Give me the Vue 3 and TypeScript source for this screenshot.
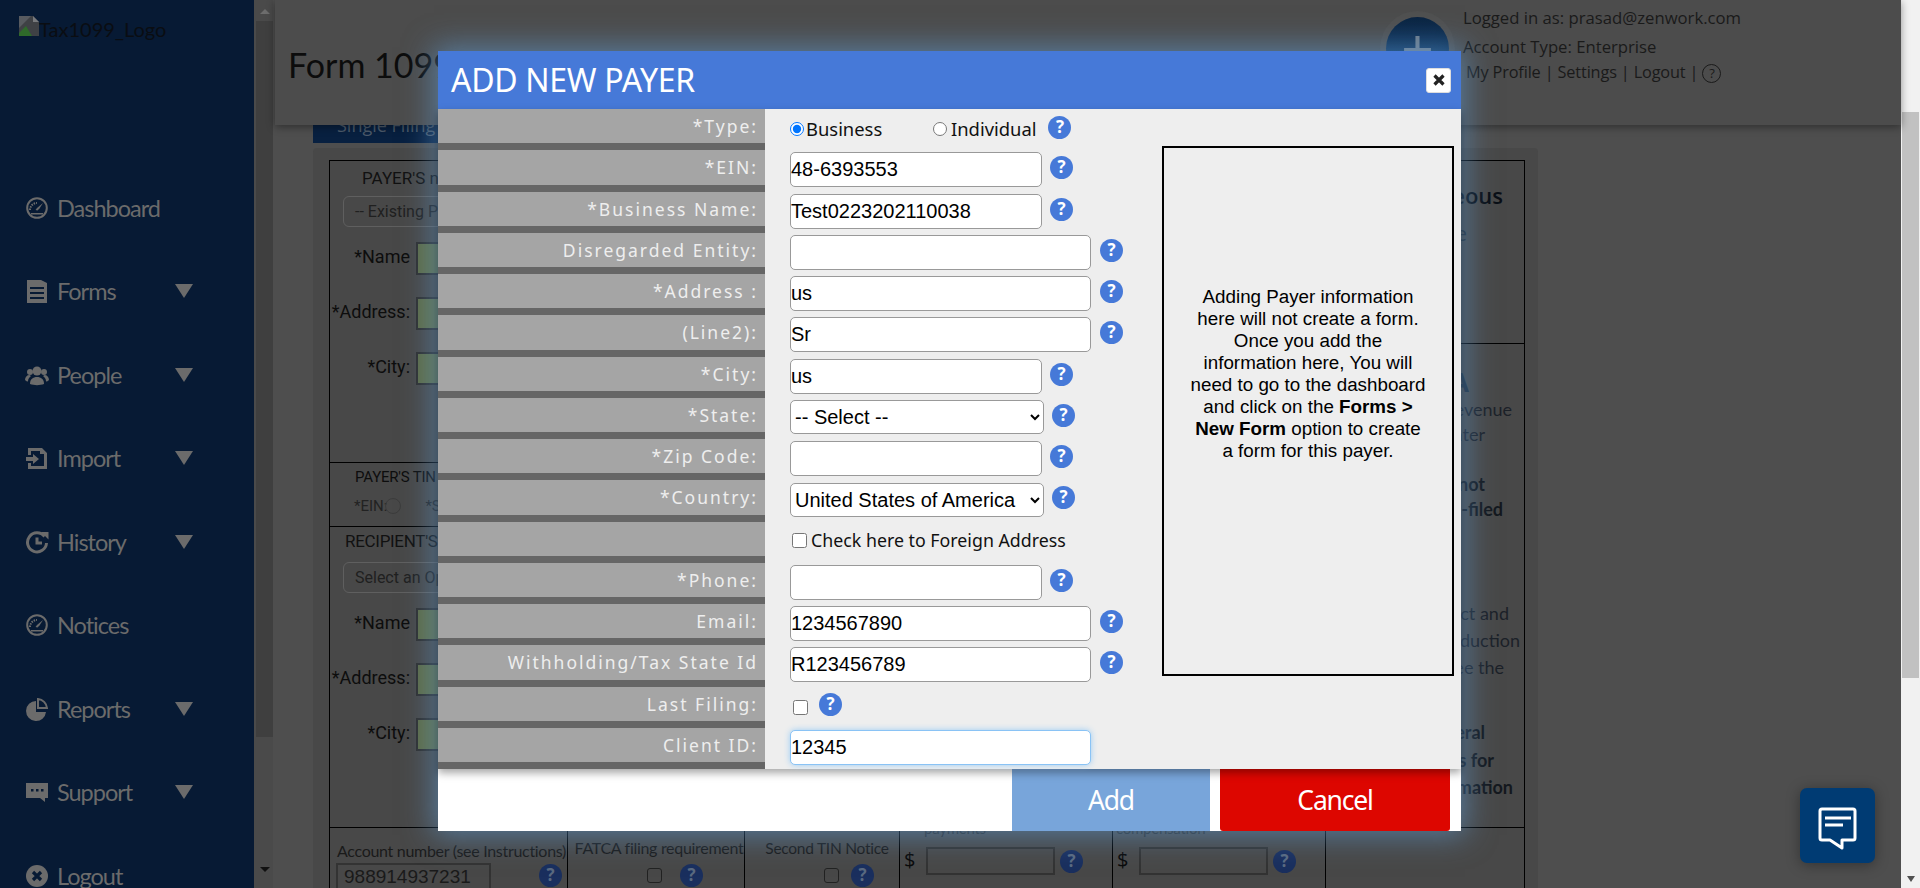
<script setup lang="ts">
interface Row { label: string; kind: string; value?: string; wide?: boolean }
const rows: Row[] = [
  { label: '*Type:', kind: 'type' },
  { label: '*EIN:', kind: 'input', value: '48-6393553' },
  { label: '*Business Name:', kind: 'input', value: 'Test0223202110038' },
  { label: 'Disregarded Entity:', kind: 'input', value: '', wide: true },
  { label: '*Address :', kind: 'input', value: 'us', wide: true },
  { label: '(Line2):', kind: 'input', value: 'Sr', wide: true },
  { label: '*City:', kind: 'input', value: 'us' },
  { label: '*State:', kind: 'state' },
  { label: '*Zip Code:', kind: 'input', value: '' },
  { label: '*Country:', kind: 'country' },
  { label: '', kind: 'foreign' },
  { label: '*Phone:', kind: 'input', value: '' },
  { label: 'Email:', kind: 'input', value: '1234567890', wide: true },
  { label: 'Withholding/Tax State Id', kind: 'input', value: 'R123456789', wide: true },
  { label: 'Last Filing:', kind: 'last' },
  { label: 'Client ID:', kind: 'client', value: '12345' },
]
const menu = [
  { name: 'Dashboard', icon: 'gauge', arrow: false },
  { name: 'Forms', icon: 'forms', arrow: true },
  { name: 'People', icon: 'people', arrow: true },
  { name: 'Import', icon: 'import', arrow: true },
  { name: 'History', icon: 'history', arrow: true },
  { name: 'Notices', icon: 'gauge', arrow: false },
  { name: 'Reports', icon: 'reports', arrow: true },
  { name: 'Support', icon: 'support', arrow: true },
  { name: 'Logout', icon: 'logout', arrow: false },
]
const topLines = [
  { t: 'Miscellaneous', c: 'h', gap: 19, pad: 21 },
  { t: 'Income type', c: 'm', gap: 10, pad: 57 },
]
const sideLines = [
  { t: 'Copy A', c: 'hb', gap: 23, pad: 55 },
  { t: 'For Internal Revenue', c: 's', gap: 0, pad: 12 },
  { t: 'Service Center', c: 's', gap: 0, pad: 39 },
  { t: 'Do not', c: 'sb', gap: 25, pad: 39 },
  { t: 'be e-filed', c: 'sb', gap: 0, pad: 21 },
  { t: 'for direct and', c: 's', gap: 79, pad: 15 },
  { t: 'for reduction', c: 's', gap: 2, pad: 4 },
  { t: 'see the', c: 's', gap: 2, pad: 20 },
  { t: 'General', c: 'sb', gap: 40, pad: 39 },
  { t: 'Instructions for', c: 'sb', gap: 3, pad: 30 },
  { t: 'information', c: 'sb', gap: 2, pad: 11 },
]
</script>

<template>
  <div class="page">
    <aside class="sidebar">
      <div class="logo">
        <svg class="broken" width="20" height="20" viewBox="0 0 20 20">
          <path d="M0 0h14l6 6v14H0z" fill="#3f4145" />
          <path d="M14 0l6 6h-6z" fill="#77797c" />
          <path d="M0 20v-3l7-7 6 10z" fill="#2f6a2a" />
          <path d="M0 0h12L0 12z" fill="#585b60" />
        </svg>
        <span>Tax1099_Logo</span>
      </div>
      <nav class="menu">
        <div v-for="m in menu" :key="m.name" class="mitem">
          <svg class="micon" width="24" height="24" viewBox="0 0 24 24" fill="#6b6b6b">
            <template v-if="m.icon === 'gauge'">
              <circle cx="12" cy="12" r="9.800" fill="none" stroke="#6b6b6b" stroke-width="2" />
              <path d="M5 14a7 7 0 0 1 7-7" fill="none" stroke="#6b6b6b" stroke-width="2" stroke-dasharray="1.500 1" />
              <path d="M18 7l-6 5-1.500 2 2 .5 2-2z" />
              <path d="M6 17h12v1.500H6z" />
            </template>
            <template v-else-if="m.icon === 'forms'">
              <path d="M2 1h14l6 3v20H2zM5 8v2h14V8zm0 5v2h14v-2zm0 5v2h14v-2z" fill-rule="evenodd" />
            </template>
            <template v-else-if="m.icon === 'people'">
              <circle cx="12" cy="8" r="4.500" />
              <circle cx="5" cy="9" r="3" />
              <circle cx="19" cy="9" r="3" />
              <path d="M5 21c0-5 3-7 7-7s7 2 7 7c-4 1.500-10 1.500-14 0z" />
              <path d="M0 17c0-3 2-5 4.500-5l1.500 1c-2 1.500-3 3-3 5.500-1 0-2-.5-3-1.500zM24 17c0-3-2-5-4.500-5l-1.500 1c2 1.500 3 3 3 5.500 1 0 2-.5 3-1.500z" />
            </template>
            <template v-else-if="m.icon === 'import'">
              <path d="M3 2h14l5 5v16H3v-6h3v3h13V8h-4V5H6v4H3z" />
              <path d="M1 11h7V8l6 5-6 5v-3H1z" />
            </template>
            <template v-else-if="m.icon === 'history'">
              <path d="M19.500 6.500A9.500 9.500 0 1 0 21.500 13" fill="none" stroke="#6b6b6b" stroke-width="3" />
              <path d="M16 2h7.500v7.500z" />
              <path d="M12 7.500v5.500h5" fill="none" stroke="#6b6b6b" stroke-width="3" />
            </template>
            <template v-else-if="m.icon === 'reports'">
              <path d="M11 4a10 10 0 1 0 10 11H11z" />
              <path d="M13 2a10 10 0 0 1 9 9h-9z" fill="none" stroke="#6b6b6b" stroke-width="2" />
            </template>
            <template v-else-if="m.icon === 'support'">
              <path d="M1 3h22v15h-3v4l-5-4H1z" />
              <path d="M6 9h2.500v2.500H6zm5 0h2.500v2.500H11zm5 0h2.500v2.500H16z" fill="#071a34" />
            </template>
            <template v-else>
              <circle cx="12" cy="12" r="11" />
              <path d="M8 8l8 8M16 8l-8 8" stroke="#071a34" stroke-width="3.200" />
            </template>
          </svg>
          <span class="mname">{{ m.name }}</span>
          <i v-if="m.arrow" class="marrow"></i>
        </div>
      </nav>
    </aside>

    <div class="inner-scroll">
      <i class="up"></i>
      <div class="inner-thumb"></div>
      <i class="down"></i>
    </div>

    <main class="main">
      <header class="top">
        <h1>Form 1099-MISC</h1>
        <div class="top-right">
          <div class="plus"><span>+</span></div>
          <div class="acct">
            <div>Logged in as: prasad@zenwork.com</div>
            <div>Account Type: Enterprise</div>
            <div class="links">My Profile | Settings | Logout | <b class="hlp">?</b></div>
          </div>
        </div>
      </header>
      <div class="tab">Single Filing</div>
      <section class="panel">
        <div class="sheet">
          <div class="sheet-top">
            <div class="s-left">
              <div class="block payer">
                <div class="cap">PAYER'S name</div>
                <div class="fake-select">-- Existing Payer --</div>
                <div class="lbl-row"><label>*Name</label><div class="green"></div></div>
                <div class="lbl-row"><label>*Address:</label><div class="green"></div></div>
                <div class="lbl-row"><label>*City:</label><div class="green"></div></div>
              </div>
              <div class="block tin">
                <div class="cap-s">PAYER'S TIN</div>
                <div class="tin-row"><span>*EIN:</span><i class="radio"></i><span class="ssn">*SSN:</span></div>
              </div>
              <div class="block recip">
                <div class="cap big">RECIPIENT'S name</div>
                <div class="fake-select">Select an Option</div>
                <div class="lbl-row"><label>*Name</label><div class="green"></div></div>
                <div class="lbl-row"><label>*Address:</label><div class="green"></div></div>
                <div class="lbl-row"><label>*City:</label><div class="green"></div></div>
              </div>
            </div>
            <div class="s-right">
              <div class="s-right-a">
                <div v-for="l in topLines" :key="l.t" :class="['sl', l.c]" :style="{ marginTop: l.gap + 'px', paddingRight: l.pad + 'px' }">{{ l.t }}</div>
              </div>
              <div class="s-right-b">
                <div v-for="l in sideLines" :key="l.t" :class="['sl', l.c]" :style="{ marginTop: l.gap + 'px', paddingRight: l.pad + 'px' }">{{ l.t }}</div>
              </div>
            </div>
          </div>
          <div class="sheet-bottom">
            <div class="c c1">
              <div class="ct">Account number (see Instructions)</div>
              <div class="cf"><div class="acctno">988914937231</div><b class="q dark">?</b></div>
            </div>
            <div class="c c2">
              <div class="ct">FATCA filing requirement</div>
              <div class="cf"><i class="cb"></i><b class="q dark">?</b></div>
            </div>
            <div class="c c3">
              <div class="ct">Second TIN Notice</div>
              <div class="cf"><i class="cb"></i><b class="q dark">?</b></div>
            </div>
            <div class="c c4">
              <div class="ct">payments</div>
              <div class="cf"><span class="dollar">$</span><div class="money"></div><b class="q dark">?</b></div>
            </div>
            <div class="c c5">
              <div class="ct">compensation</div>
              <div class="cf"><span class="dollar">$</span><div class="money"></div><b class="q dark">?</b></div>
            </div>
            <div class="c6"></div>
          </div>
        </div>
      </section>
    </main>

    <div class="page-scroll">
      <i class="pup"></i>
      <div class="page-thumb"></div>
      <i class="pdown"></i>
    </div>

    <div class="modal">
      <div class="m-head">
        <span>ADD NEW PAYER</span>
        <button class="close" type="button">
          <svg width="12" height="12" viewBox="0 0 12 12"><path d="M1.500 1.500l9 9M10.500 1.500l-9 9" stroke="#222" stroke-width="3.200" /></svg>
        </button>
      </div>
      <div class="m-body">
        <div class="m-form">
          <div v-for="r in rows" :key="r.label + r.kind" class="row">
            <div class="rl">{{ r.label }}</div>
            <div class="rf">
              <template v-if="r.kind === 'type'">
                <label class="opt-radio first"><input type="radio" name="t" checked />Business</label>
                <label class="opt-radio second"><input type="radio" name="t" />Individual</label>
                <b class="q type-q">?</b>
              </template>
              <template v-else-if="r.kind === 'input'">
                <input class="tx" :class="{ wide: r.wide }" :value="r.value" type="text" />
                <b class="q" :class="{ wq: r.wide }">?</b>
              </template>
              <template v-else-if="r.kind === 'state'">
                <select class="sel st"><option>-- Select --</option></select>
                <b class="q">?</b>
              </template>
              <template v-else-if="r.kind === 'country'">
                <select class="sel ct2"><option>United States of America</option></select>
                <b class="q">?</b>
              </template>
              <template v-else-if="r.kind === 'foreign'">
                <label class="chk"><input type="checkbox" />Check here to Foreign Address</label>
              </template>
              <template v-else-if="r.kind === 'last'">
                <input class="lastcb" type="checkbox" />
                <b class="q last-q">?</b>
              </template>
              <template v-else>
                <input class="tx wide focus" :value="r.value" type="text" />
              </template>
            </div>
          </div>
        </div>
        <div class="info">
          <p>Adding Payer information<br />here will not create a form.<br />Once you add the<br />information here, You will<br />need to go to the dashboard<br />and click on the <b>Forms &gt;<br />New Form</b> option to create<br />a form for this payer.</p>
        </div>
      </div>
      <div class="m-foot">
        <button class="btn add" type="button">Add</button>
        <button class="btn cancel" type="button">Cancel</button>
      </div>
    </div>

    <div class="chat">
      <svg width="39" height="43" viewBox="0 0 39 43" fill="none">
        <path d="M4 2h31a2 2 0 0 1 2 2v27a2 2 0 0 1-2 2H24v8L12 33H4a2 2 0 0 1-2-2V4a2 2 0 0 1 2-2z" stroke="#fff" stroke-width="3" stroke-linejoin="round" />
        <path d="M7 11h26M7 18h18" stroke="#fff" stroke-width="3" />
      </svg>
    </div>
  </div>
</template>

<style>
html, body { margin: 0; padding: 0; overflow: hidden; }
</style>

<style scoped>
.page {
  position: relative;
  width: 1920px;
  height: 888px;
  overflow: hidden;
  display: flex;
  background: #4e4e4e;
  font-family: "Open Sans", sans-serif;
  color: #0d0d0d;
}
.sidebar { width: 254px; flex: none; background: #071a34; }
.logo { height: 166px; padding: 16px 0 0 19px; box-sizing: border-box; display: flex; align-items: flex-start; font: 20px Lato, sans-serif; color: #0a0d12; }
.logo span { line-height: 26px; }
.broken { flex: none; }
.menu { display: flex; flex-direction: column; }
.mitem { height: 83.5px; display: flex; align-items: center; padding: 0 0 0 25px; box-sizing: border-box; flex: none; }
.micon { flex: none; }
.mname { font: 23.5px Lato, sans-serif; letter-spacing: -1px; color: #6b6b6b; margin-left: 8px; width: 118px; }
.marrow { width: 0; height: 0; border-left: 9.5px solid transparent; border-right: 9.5px solid transparent; border-top: 14px solid #6b6b6b; }
.inner-scroll { width: 19px; flex: none; background: #4a4a4a; display: flex; flex-direction: column; align-items: center; padding-left: 2px; box-sizing: border-box; }
.inner-scroll .up { border-left: 5px solid transparent; border-right: 5px solid transparent; border-bottom: 5px solid #6d6d6d; margin: 9px 0 7px; }
.inner-thumb { width: 17px; height: 716px; background: #3f3f3f; }
.inner-scroll .down { border-left: 5px solid transparent; border-right: 5px solid transparent; border-top: 5px solid #111; margin-top: 130px; }

.main { width: 1628px; flex: none; display: flex; flex-direction: column; padding-left: 2px; box-sizing: border-box; }
.top { height: 125px; flex: none; width: 1626px; background: #4c4c4c; box-shadow: 0 2px 8px rgba(0,0,0,.4); display: flex; position: relative; z-index: 1; box-sizing: border-box; padding-left: 13px; }
.top h1 { margin: 45px 0 0; font: 400 34px/40px Lato, sans-serif; color: #0c0c0c; white-space: nowrap; width: 1098px; }
.top-right { display: flex; }
.plus { width: 63px; height: 63px; border-radius: 50%; background: linear-gradient(#0a2340, #103c69); box-shadow: 0 0 0 6px #505050; margin-top: 17px; text-align: center; color: #6e7a86; font: 56px/62px Lato, sans-serif; flex: none; }
.acct { margin: 3px 0 0 14px; font: 16.7px/29px "Open Sans", sans-serif; color: #1a1a1a; white-space: nowrap; }
.links { margin-left: 3px; line-height: 22px; font-size: 16.3px; letter-spacing: -.15px; }
.hlp { display: inline-block; width: 17px; height: 17px; border: 1px solid #1a1a1a; border-radius: 50%; font: 400 13px/17px "Open Sans", sans-serif; text-align: center; }
.tab { margin-left: 38px; width: 300px; height: 18px; background: #082040; flex: none; color: #4c5a6a; font: 18px/0 "Open Sans", sans-serif; padding-left: 24px; box-sizing: border-box; overflow: hidden; }
.panel { margin: 5px 0 0 38px; width: 1225px; height: 760px; background: #484848; border-radius: 4px; flex: none; padding: 12px 0 0 16px; box-sizing: border-box; }
.sheet { width: 1196px; border-top: 1px solid #000; border-left: 1px solid #000; border-right: 1px solid #000; box-sizing: border-box; }
.sheet-top { display: flex; height: 667px; border-bottom: 1px solid #000; box-sizing: border-box; }
.s-left { width: 780px; flex: none; display: flex; flex-direction: column; }
.block { border-bottom: 1px solid #000; flex: none; }
.payer { height: 301px; }
.tin { height: 63px; }
.recip { border-bottom: 0; }
.cap { font: 17px/35px Roboto, sans-serif; padding: 0 0 0 32px; color: #111; height: 35px; white-space: nowrap; }
.cap.big { padding-left: 15px; line-height: 28px; letter-spacing: -.3px; }
.cap-s { font: 15px/28px Roboto, sans-serif; padding: 0 0 0 25px; letter-spacing: -.2px; }
.fake-select { margin-left: 13px; width: 600px; height: 31px; border: 1px solid #5f5f5f; border-radius: 6px; font: 16px/29px Roboto, sans-serif; color: #202020; padding-left: 11px; box-sizing: border-box; }
.lbl-row { display: flex; align-items: center; height: 33px; margin-top: 22px; }
.fake-select + .lbl-row { margin-top: 15px; }
.lbl-row label { width: 80px; text-align: right; font: 18px/1 Roboto, sans-serif; color: #0d0d0d; margin: 0 6px 3px 0; white-space: nowrap; }
.green { width: 400px; height: 33px; background: #5d6b47; border: 2px solid #2f2f2f; box-sizing: border-box; }
.tin-row { display: flex; align-items: center; font: 15px Roboto, sans-serif; padding-left: 24px; color: #222; margin-top: 6px; }
.radio { width: 14px; height: 14px; border: 1px solid #3c3c3c; border-radius: 50%; margin-left: -2px; }
.ssn { margin-left: 24px; }
.s-right { flex: 1; display: flex; flex-direction: column; }
.s-right-a { height: 183px; flex: none; border-bottom: 1px solid #000; box-sizing: border-box; overflow: hidden; }
.s-right-b { flex: 1; overflow: hidden; }
.sl { text-align: right; white-space: nowrap; font-family: Lato, sans-serif; color: #111; }
.sl.h { font: 600 22px/30px "Open Sans", sans-serif; color: #0a0f16; }
.sl.m { font: 400 20px/27px "Open Sans", sans-serif; color: #20282f; }
.sl.hb { font: 700 26px/30px "Open Sans", sans-serif; color: #1d2a38; }
.sl.s { font-size: 18px; line-height: 25px; color: #1c2128; }
.sl.sb { font-size: 18px; line-height: 25px; font-weight: 700; color: #14181e; }
.sheet-bottom { display: flex; height: 120px; }
.c { border-right: 1px solid #000; box-sizing: border-box; flex: none; }
.c1 { width: 238px; }
.c2 { width: 177px; }
.c3 { width: 155px; }
.c4 { width: 213px; }
.c5 { width: 213px; }
.c6 { flex: 1; }
.ct { font: 17px/18px Lato, sans-serif; letter-spacing: -.25px; white-space: nowrap; color: #1a1a1a; }
.cf { display: flex; align-items: flex-start; }
.c1 .ct { padding: 14px 0 0 7px; font-size: 16px; letter-spacing: -.3px; }
.c1 .cf { padding-left: 6px; margin-top: 3px; }
.acctno { width: 155px; height: 30px; border: 2px solid #333; box-sizing: border-box; font: 19px/24px "Liberation Sans", sans-serif; padding-left: 6px; color: #1a1a1a; }
.c1 .q { margin: 1px 0 0 48px; }
.c2 .ct, .c3 .ct { padding-top: 11px; text-align: center; }
.c2 .ct { font-size: 16px; letter-spacing: -.3px; padding-left: 6px; }
.c3 .ct { font-size: 15.5px; padding-left: 10px; }
.c2 .cf, .c3 .cf { margin-top: 7px; align-items: center; }
.c2 .cf { padding-left: 79px; }
.c3 .cf { padding-left: 79px; }
.cb { width: 15px; height: 15px; border: 1px solid #222; border-radius: 3px; box-sizing: border-box; flex: none; }
.c2 .q { margin-left: 18px; }
.c3 .q { margin-left: 12px; }
.c4 .ct, .c5 .ct { margin-top: -9px; color: #2a2a2a; font-size: 15px; }
.c4 .ct { padding-left: 24px; }
.c5 .ct { padding-left: 3px; }
.c4 .cf, .c5 .cf { margin-top: 10px; padding-left: 4px; }
.dollar { font: 20px/26px "Open Sans", sans-serif; color: #0a0a0a; width: 22px; flex: none; }
.money { width: 129px; height: 28px; border: 2px solid #333; box-sizing: border-box; flex: none; }
.c4 .q, .c5 .q { margin: 3px 0 0 5px; }
.q { flex: none; width: 23px; height: 23px; border-radius: 50%; background: #4679d8; color: #fff; font: 700 17px/22px "Open Sans", sans-serif; text-align: center; display: inline-block; }
.q.dark { background: #1a2f5e; color: #5a6a80; }

.page-scroll { position: absolute; right: 0; top: 0; width: 19px; height: 888px; background: #f1f1f1; display: flex; flex-direction: column; align-items: center; }
.pup { height: 112px; flex: none; }
.page-thumb { width: 17px; height: 566px; background: #c1c1c1; flex: none; }
.pdown { border-left: 4px solid transparent; border-right: 4px solid transparent; border-top: 6px solid #505050; margin-top: 198px; }

.modal { position: absolute; left: 438px; top: 51px; width: 1023px; height: 780px; background: #fff; box-shadow: 0 0 28px 4px rgba(100, 165, 225, .55); display: flex; flex-direction: column; z-index: 5; }
.m-head { height: 58px; flex: none; background: #4679d8; color: #fff; font: 400 32px/58px "Noto Sans", sans-serif; padding: 0 10px 0 13px; display: flex; justify-content: space-between; align-items: center; box-sizing: border-box; letter-spacing: -0.3px; }
.close { width: 25px; height: 25px; padding: 0; background: #fff; border: 1px solid #ddd; border-radius: 3px; display: flex; align-items: center; justify-content: center; }
.m-body { height: 660px; flex: none; background: #eee; display: flex; box-shadow: 0 4px 8px rgba(0,0,0,.35); position: relative; }
.m-form { width: 724px; flex: none; }
.row { height: 41.25px; display: flex; }
.rl { width: 327px; flex: none; box-sizing: border-box; background: #a5a5a5; border-bottom: 7.5px solid #666; color: #eee; text-align: right; font: 17.5px/34px "Noto Sans", sans-serif; letter-spacing: 2px; padding-right: 7px; white-space: nowrap; }
.rf { flex: 1; padding: 0 0 2px 25px; display: flex; align-items: center; box-sizing: border-box; font: 18px "Noto Sans", sans-serif; color: #111; }
.tx { width: 252px; height: 35px; box-sizing: border-box; border: 1px solid #999; border-radius: 5px; background: #fff; font: 20px "Liberation Sans", sans-serif; color: #000; padding: 0; margin: 0; outline: none; }
.tx.wide { width: 301px; }
.focus { border-color: #8ac3f5; box-shadow: 0 0 6px #9ccdf5; }
.rf .q { margin: -4px 0 0 8px; }
.rf .q.wq { margin-left: 9px; }
.sel { height: 34px; border: 1px solid #999; border-radius: 5px; background: #fff; font: 20px "Liberation Sans", sans-serif; color: #000; margin: 0; box-sizing: border-box; }
.st, .ct2 { width: 254px; }
.opt-radio { display: flex; align-items: center; font-size: 18.4px; }
.opt-radio input { margin: 0 2px 0 0; width: 14px; height: 14px; }
.opt-radio.first { width: 144px; }
.opt-radio.second input { margin-right: 4px; margin-left: -1px; }
.rf .type-q { margin: -3px 0 0 12px; }
.chk { display: flex; align-items: center; margin: 0 0 2px 2px; font-size: 17.8px; }
.chk input { margin: 0 4px 0 0; width: 15px; height: 15px; }
.lastcb { margin: 3px 0 0 3px; width: 15px; height: 15px; }
.rf .last-q { margin: -3px 0 0 11px; }
.info { margin: 37px 0 0 0; width: 292px; height: 530px; border: 2px solid #000; box-sizing: border-box; font: 18.8px/22px "Liberation Sans", sans-serif; color: #000; text-align: center; padding-top: 138px; }
.info p { margin: 0; }
.m-foot { flex: 1; display: flex; padding-left: 574px; }
.btn { height: 62px; border: 0; color: #fff; font: 26.5px "Noto Sans", sans-serif; padding: 0; margin: 0; letter-spacing: -1.2px; }
.add { width: 198px; background: #78a5da; }
.cancel { width: 230px; margin-left: 10px; background: #dd0600; border-radius: 0 0 3px 3px; }

.chat { position: absolute; left: 1800px; top: 788px; width: 75px; height: 75px; background: #003b73; border-radius: 7px; box-shadow: 0 2px 14px rgba(0,0,0,.35); display: flex; align-items: flex-start; justify-content: center; padding-top: 19px; box-sizing: border-box; z-index: 6; }
</style>
